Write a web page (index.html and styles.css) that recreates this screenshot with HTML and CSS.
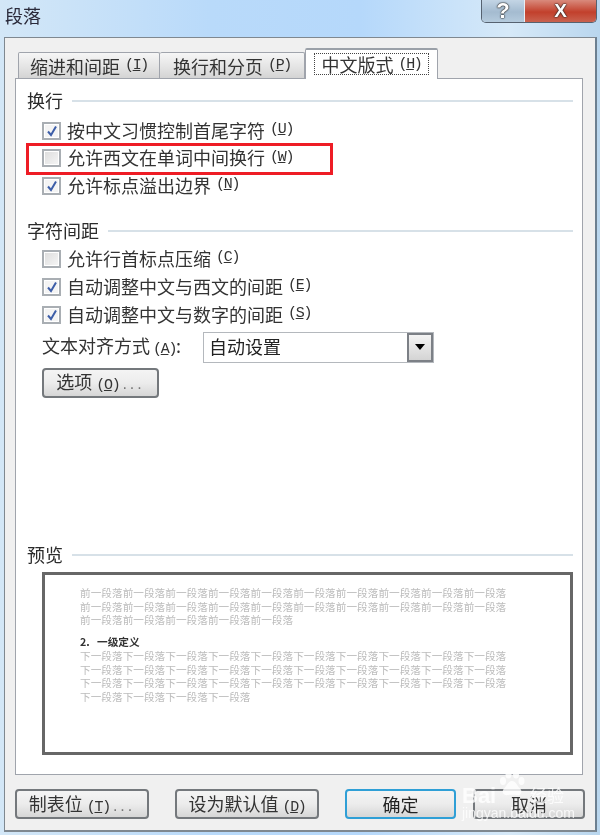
FILE: index.html
```html
<!DOCTYPE html>
<html lang="zh-CN">
<head>
    <meta charset="UTF-8">
    <title>段落</title>
    <link rel="stylesheet" href="styles.css">
</head>
<body>
    <div class="window">
        <div class="titlebar">
            <span class="title">段落</span>
            <div class="win-buttons">
                <span class="win-help">?</span>
                <span class="win-close">X</span>
            </div>
        </div>

        <div class="dialog">
            <div class="tabs">
                <div class="tab tab-first">缩进和间距<span class="key">(<u>I</u>)</span></div>
                <div class="tab tab-second">换行和分页<span class="key">(<u>P</u>)</span></div>
                <div class="tab tab-active"><span class="focus">中文版式<span class="key">(<u>H</u>)</span></span></div>
            </div>

            <div class="page">
                <div class="group-title">换行<span class="rule"></span></div>
                <div class="check-row"><span class="checkbox checked"><svg viewBox="0 0 12 12"><path d="M2 6.5 L5 10 L10 1.5"/></svg></span>按中文习惯控制首尾字符<span class="key">(<u>U</u>)</span></div>
                <div class="check-row"><span class="checkbox"></span>允许西文在单词中间换行<span class="key">(<u>W</u>)</span></div>
                <div class="check-row"><span class="checkbox checked"><svg viewBox="0 0 12 12"><path d="M2 6.5 L5 10 L10 1.5"/></svg></span>允许标点溢出边界<span class="key">(<u>N</u>)</span></div>

                <div class="group-title group-second">字符间距<span class="rule"></span></div>
                <div class="check-row wide"><span class="checkbox"></span>允许行首标点压缩<span class="key">(<u>C</u>)</span></div>
                <div class="check-row wide"><span class="checkbox checked"><svg viewBox="0 0 12 12"><path d="M2 6.5 L5 10 L10 1.5"/></svg></span>自动调整中文与西文的间距<span class="key">(<u>E</u>)</span></div>
                <div class="check-row wide"><span class="checkbox checked"><svg viewBox="0 0 12 12"><path d="M2 6.5 L5 10 L10 1.5"/></svg></span>自动调整中文与数字的间距<span class="key">(<u>S</u>)</span></div>

                <div class="select-row">
                    <span class="select-label">文本对齐方式<span class="key">(<u>A</u>)</span>:</span>
                    <div class="select">
                        <span class="select-value">自动设置</span>
                        <span class="select-arrow"><svg viewBox="0 0 10 6"><path d="M0 0 H10 L5 6 Z"/></svg></span>
                    </div>
                </div>
                <button class="btn btn-options">选项<span class="key">(<u>O</u>)</span><span class="dots">...</span></button>

                <div class="preview-section">
                    <div class="group-title">预览<span class="rule"></span></div>
                    <div class="preview">
                        <p class="pv-line">前一段落前一段落前一段落前一段落前一段落前一段落前一段落前一段落前一段落前一段落</p>
                        <p class="pv-line">前一段落前一段落前一段落前一段落前一段落前一段落前一段落前一段落前一段落前一段落</p>
                        <p class="pv-line">前一段落前一段落前一段落前一段落前一段落</p>
                        <p class="pv-heading"><span class="pv-num">2.</span>一级定义</p>
                        <p class="pv-line">下一段落下一段落下一段落下一段落下一段落下一段落下一段落下一段落下一段落下一段落</p>
                        <p class="pv-line">下一段落下一段落下一段落下一段落下一段落下一段落下一段落下一段落下一段落下一段落</p>
                        <p class="pv-line">下一段落下一段落下一段落下一段落下一段落下一段落下一段落下一段落下一段落下一段落</p>
                        <p class="pv-line">下一段落下一段落下一段落下一段落</p>
                    </div>
                </div>
            </div>

            <div class="footer">
                <button class="btn btn-tabs">制表位<span class="key">(<u>T</u>)</span><span class="dots">...</span></button>
                <button class="btn btn-default">设为默认值<span class="key">(<u>D</u>)</span></button>
                <button class="btn btn-ok">确定</button>
                <button class="btn btn-cancel">取消</button>
            </div>
        </div>

        <div class="highlight"></div>

        <div class="watermark">
            <svg class="paw" viewBox="0 0 60 60">
                <ellipse cx="14" cy="26" rx="6" ry="8"/>
                <ellipse cx="25" cy="12" rx="6" ry="9"/>
                <ellipse cx="40" cy="12" rx="6" ry="9"/>
                <ellipse cx="51" cy="26" rx="6" ry="8"/>
                <path d="M32 26 C24 26 22 36 16 41 C10 47 15 56 24 54 C29 53 35 53 41 54 C50 56 54 47 48 41 C42 36 40 26 32 26 Z"/>
            </svg>
            <span class="wm-brand">Bai</span>
            <span class="wm-cn">经验</span>
            <span class="wm-url">jingyan.baidu.com</span>
        </div>
    </div>
</body>
</html>
```

FILE: styles.css
```css
* {
    box-sizing: border-box;
    margin: 0;
    padding: 0;
}

body {
    width: 600px;
    height: 835px;
    overflow: hidden;
    font-family: "Noto Sans CJK SC", "Liberation Sans", sans-serif;
    font-size: 18px;
    color: #222;
}

.window {
    position: relative;
    width: 600px;
    height: 835px;
    display: flex;
    flex-direction: column;
    background: linear-gradient(90deg, #d3e7f7 0%, #b9dafa 35%, #b5d8fb 60%, #d6e9f8 85%, #b9d6ee 100%);
    filter: blur(0.45px);
}

/* title bar */
.titlebar {
    height: 37px;
    flex: none;
    display: flex;
    align-items: flex-start;
    padding-left: 5px;
}

.title {
    margin-top: 3px;
    font-size: 18px;
    line-height: 24px;
    color: #2a2a3a;
}

.win-buttons {
    margin-left: auto;
    margin-right: 3px;
    height: 23px;
    display: flex;
    border: 1px solid #566270;
    border-top: none;
    border-radius: 0 0 5px 5px;
    overflow: hidden;
}

.win-help,
.win-close {
    display: flex;
    justify-content: center;
    align-items: center;
    font-family: "Liberation Sans", sans-serif;
    font-weight: bold;
    color: #fff;
    text-shadow: 0 0 2px #222, 0 0 1px #222, 0 0 1px #222;
}

.win-help {
    width: 43px;
    background: linear-gradient(#c3d5e5, #a4bbd0 55%, #b5cbdd);
    font-size: 22px;
    border-right: 1px solid #e8eef4;
}

.win-close {
    width: 71px;
    background: linear-gradient(#d98a7c, #c2402c 55%, #c9624f);
    font-size: 19px;
}

/* main dialog */
.dialog {
    flex: 1;
    margin: 0 3px 3px 4px;
    padding: 10px 11px 11px 10px;
    display: flex;
    flex-direction: column;
    background: #f0f0f0;
    border: 1px solid #7f8890;
    border-right: 2px solid #6c7f90;
    border-bottom-width: 2px;
}

.tabs {
    height: 30px;
    flex: none;
    display: flex;
    align-items: flex-end;
    padding-left: 3px;
    margin-right: 1px;
}

.tab {
    height: 26px;
    display: flex;
    align-items: center;
    justify-content: center;
    line-height: 1;
    color: #333;
    background: linear-gradient(#f6f6f6, #e6e6e6 50%, #d4d4d4);
    border: 1px solid #a0a4ac;
    border-bottom: none;
    border-radius: 2px 2px 0 0;
    margin-bottom: 0;
}

.tab-first {
    width: 142px;
}

.tab-second {
    width: 145px;
    border-left: none;
}

.tab-active {
    position: relative;
    z-index: 1;
    width: 133px;
    height: 31px;
    margin-bottom: -1px;
    background: #fff;
    border-top: 2px solid #9aa0a8;
}

.focus {
    display: flex;
    align-items: center;
    justify-content: center;
    width: 115px;
    height: 22px;
    margin-top: -1px;
    border: 1px dotted #444;
}

.page {
    flex: 1;
    margin-right: 1px;
    padding: 10px 9px 19px 11px;
    display: flex;
    flex-direction: column;
    background: #fff;
    border: 1px solid #a0a4ac;
}

.group-title {
    height: 24px;
    flex: none;
    display: flex;
    align-items: center;
    margin-bottom: 4px;
    padding-bottom: 2px;
    line-height: 1;
    color: #2b2b2b;
}

.group-second {
    margin-top: 19px;
    margin-bottom: 2px;
}

.rule {
    flex: 1;
    height: 2px;
    margin-left: 9px;
    margin-top: 2px;
    background: #d7e1e8;
}

.check-row {
    height: 27.5px;
    flex: none;
    display: flex;
    align-items: center;
    padding-left: 15px;
    padding-bottom: 2px;
    line-height: 1;
    color: #333;
}

.check-row.wide {
    height: 28px;
}

.checkbox {
    width: 19px;
    height: 18px;
    flex: none;
    margin-top: 2px;
    margin-right: 6px;
    display: flex;
    align-items: center;
    justify-content: center;
    background: linear-gradient(135deg, #dcdcdc, #f6f6f6);
    border: 2px solid #a9aeb3;
    box-shadow: inset 0 0 0 1px #fff;
}

.checkbox.checked {
    background: #f4f4f4;
}

.checkbox svg {
    width: 12px;
    height: 12px;
}

.checkbox path {
    fill: none;
    stroke: #3d5ea8;
    stroke-width: 2;
}

.key {
    margin-left: 5px;
    font-family: "Liberation Mono", monospace;
    font-size: 15px;
    letter-spacing: -1.3px;
    color: #333;
}

.select-row {
    height: 31px;
    flex: none;
    display: flex;
    align-items: center;
    margin-top: 3px;
    padding-left: 15px;
    line-height: 1;
}

.select-label {
    width: 161px;
    margin-bottom: 2px;
    color: #333;
    white-space: nowrap;
}

.select-label .key {
    margin-left: 3px;
}

.select {
    width: 231px;
    height: 31px;
    display: flex;
    align-items: center;
    background: #fff;
    border: 1px solid #b4b8bd;
}

.select-value {
    flex: 1;
    padding-left: 5px;
    margin-bottom: 2px;
}

.select-arrow {
    width: 26px;
    height: 29px;
    display: flex;
    align-items: center;
    justify-content: center;
    background: linear-gradient(#f4f4f4, #d4d4d4);
    border: 2px solid #7c8086;
}

.select-arrow svg {
    width: 10px;
    height: 6px;
}

.btn {
    height: 30px;
    flex: none;
    font-family: inherit;
    font-size: 18px;
    line-height: 1;
    color: #333;
    background: linear-gradient(#f4f4f4, #ececec 50%, #d6d6d6);
    border: 2px solid #74787c;
    border-radius: 4px;
}

.btn .key {
    margin-left: 4px;
}

.btn-options {
    width: 117px;
    margin-top: 5px;
    margin-left: 15px;
}

.preview-section {
    margin-top: auto;
}

.preview-section .group-title {
    margin-bottom: 5px;
}

.preview {
    height: 183px;
    margin-left: 15px;
    padding: 11px 0 0 35px;
    border: 3px solid #676767;
    background: #fff;
    font-size: 10.67px;
    line-height: 13.7px;
    white-space: nowrap;
}

.pv-line {
    color: #bcbcbc;
}

.pv-heading {
    margin-top: 8px;
    font-weight: bold;
    color: #333;
}

.pv-num {
    display: inline-block;
    width: 17px;
}

/* bottom buttons */
.footer {
    margin-top: 14px;
    display: flex;
    flex: none;
}

.btn-tabs {
    width: 134px;
}

.dots {
    margin-left: 3px;
    font-family: "Liberation Sans", sans-serif;
    font-size: 16px;
    letter-spacing: 3px;
    color: #777;
}

.btn-default {
    width: 144px;
    margin-left: 26px;
}

.btn-ok {
    width: 111px;
    margin-left: 26px;
    border-color: #2f9fd6;
    color: #222;
}

.btn-cancel {
    width: 112px;
    margin-left: 17px;
}

/* red box that lies over the second option */
.highlight {
    position: absolute;
    left: 26px;
    top: 143px;
    width: 307px;
    height: 32px;
    border: 3px solid #ee1c25;
}

/* baidu watermark */
.watermark {
    position: absolute;
    left: 460px;
    top: 768px;
    width: 120px;
    height: 60px;
    color: rgba(255, 255, 255, 0.8);
}

.paw {
    position: absolute;
    left: 36px;
    top: 0;
    width: 30px;
    height: 30px;
    fill: rgba(255, 255, 255, 0.8);
}

.wm-brand {
    position: absolute;
    left: 2px;
    top: 16px;
    font-family: "Liberation Sans", sans-serif;
    font-size: 22px;
    font-weight: bold;
    line-height: 24px;
}

.wm-cn {
    position: absolute;
    left: 70px;
    top: 17px;
    font-size: 17px;
    line-height: 20px;
    white-space: nowrap;
}

.wm-url {
    position: absolute;
    left: 2px;
    top: 37px;
    font-family: "Liberation Sans", sans-serif;
    font-size: 14px;
    line-height: 16px;
    white-space: nowrap;
}
```
